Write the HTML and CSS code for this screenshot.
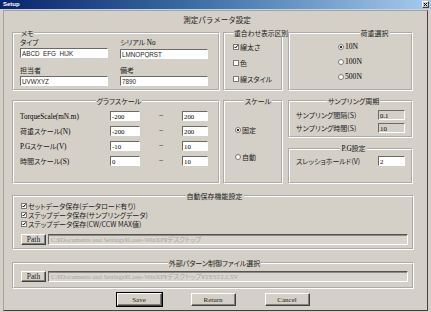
FILE: index.html
```html
<!DOCTYPE html>
<html lang="ja">
<head>
    <meta charset="UTF-8">
    <title>Setup</title>
    <link rel="stylesheet" href="styles.css">
</head>
<body>
    <div class="window">
        <div class="titlebar">
            <span class="title">Setup</span>
            <span class="close"><svg viewBox="0 0 5 5" width="5" height="5"><path d="M0.8 0.8l3.4 3.4M4.2 0.8l-3.4 3.4" stroke="#000" stroke-width="1"/></svg></span>
        </div>

        <div class="panel">
            <div class="heading">測定パラメータ設定</div>

            <!-- 上段 -->
            <div class="row">
                <fieldset class="group memo">
                    <legend class="left">メモ</legend>
                    <div class="memo-grid">
                        <div class="field"><span>タイプ</span><input class="edit" value="ABCD_EFG_HIJK"></div>
                        <div class="field"><span>シリアル <span class="lt">No</span></span><input class="edit" value="LMNOPQRST"></div>
                        <div class="field"><span>担当者</span><input class="edit" value="UVWXYZ"></div>
                        <div class="field"><span>備考</span><input class="edit" value="7890"></div>
                    </div>
                </fieldset>

                <fieldset class="group overlay">
                    <legend class="left">重合わせ表示区別</legend>
                    <div class="opt"><svg class="cb" viewBox="0 0 6 6"><rect x="0.5" y="0.5" width="5" height="5" fill="#fff" stroke="#7c7a76"/><path d="M1.4 2.8l1.1 1.2 2.1-2.6" fill="none" stroke="#000"/></svg>線太さ</div>
                    <div class="opt"><svg class="cb" viewBox="0 0 6 6"><rect x="0.5" y="0.5" width="5" height="5" fill="#fff" stroke="#7c7a76"/></svg>色</div>
                    <div class="opt"><svg class="cb" viewBox="0 0 6 6"><rect x="0.5" y="0.5" width="5" height="5" fill="#fff" stroke="#7c7a76"/></svg>線スタイル</div>
                </fieldset>

                <fieldset class="group load">
                    <legend>荷重選択</legend>
                    <div class="opt lt big"><svg class="rb" viewBox="0 0 6 6"><circle cx="3" cy="3" r="2.5" fill="#fff" stroke="#7c7a76"/><circle cx="3" cy="3" r="1.1" fill="#000"/></svg>10N</div>
                    <div class="opt lt big"><svg class="rb" viewBox="0 0 6 6"><circle cx="3" cy="3" r="2.5" fill="#fff" stroke="#7c7a76"/></svg>100N</div>
                    <div class="opt lt big"><svg class="rb" viewBox="0 0 6 6"><circle cx="3" cy="3" r="2.5" fill="#fff" stroke="#7c7a76"/></svg>500N</div>
                </fieldset>
            </div>

            <!-- 中段 -->
            <div class="row mid">
                <fieldset class="group graph">
                    <legend>グラフスケール</legend>
                    <div class="scale-row"><span class="lbl"><span class="lt">TorqueScale(mN.m)</span></span><input class="edit num" value="-200"><span class="tilde">~</span><input class="edit num max" value="200"></div>
                    <div class="scale-row"><span class="lbl">荷重スケール<span class="lt">(N)</span></span><input class="edit num" value="-200"><span class="tilde">~</span><input class="edit num max" value="200"></div>
                    <div class="scale-row"><span class="lbl"><span class="lt">P.G</span>スケール<span class="lt">(V)</span></span><input class="edit num" value="-10"><span class="tilde">~</span><input class="edit num max" value="10"></div>
                    <div class="scale-row"><span class="lbl">時間スケール<span class="lt">(S)</span></span><input class="edit num" value="0"><span class="tilde">~</span><input class="edit num max" value="10"></div>
                </fieldset>

                <fieldset class="group scale">
                    <legend>スケール</legend>
                    <div class="opt"><svg class="rb" viewBox="0 0 6 6"><circle cx="3" cy="3" r="2.5" fill="#fff" stroke="#7c7a76"/><circle cx="3" cy="3" r="1.1" fill="#000"/></svg>固定</div>
                    <div class="opt"><svg class="rb" viewBox="0 0 6 6"><circle cx="3" cy="3" r="2.5" fill="#fff" stroke="#7c7a76"/></svg>自動</div>
                </fieldset>

                <div class="col">
                    <fieldset class="group sampling">
                        <legend>サンプリング周期</legend>
                        <div class="set-row"><span class="lbl">サンプリング間隔(S)</span><input class="edit small" value="0.1" disabled></div>
                        <div class="set-row"><span class="lbl">サンプリング時間(S)</span><input class="edit small" value="10" disabled></div>
                    </fieldset>
                    <fieldset class="group pg">
                        <legend><span class="lt">P.G</span>設定</legend>
                        <div class="set-row"><span class="lbl">スレッショホールド(V)</span><input class="edit small" value="2"></div>
                    </fieldset>
                </div>
            </div>

            <!-- 自動保存 -->
            <fieldset class="group autosave">
                <legend>自動保存機能設定</legend>
                <div class="opt line"><svg class="cb" viewBox="0 0 6 6"><rect x="0.5" y="0.5" width="5" height="5" fill="#fff" stroke="#7c7a76"/><path d="M1.4 2.8l1.1 1.2 2.1-2.6" fill="none" stroke="#000"/></svg>セットデータ保存(データロード有り)</div>
                <div class="opt line"><svg class="cb" viewBox="0 0 6 6"><rect x="0.5" y="0.5" width="5" height="5" fill="#fff" stroke="#7c7a76"/><path d="M1.4 2.8l1.1 1.2 2.1-2.6" fill="none" stroke="#000"/></svg>ステップデータ保存(サンプリングデータ)</div>
                <div class="opt line"><svg class="cb" viewBox="0 0 6 6"><rect x="0.5" y="0.5" width="5" height="5" fill="#fff" stroke="#7c7a76"/><path d="M1.4 2.8l1.1 1.2 2.1-2.6" fill="none" stroke="#000"/></svg>ステップデータ保存(CW/CCW MAX値)</div>
                <div class="path-row first">
                    <button class="btn path">Path</button>
                    <div class="path-field">C:¥Documents and Settings¥Laste-WinXP¥デスクトップ</div>
                </div>
            </fieldset>

            <!-- 外部パターン -->
            <fieldset class="group pattern">
                <legend>外部パターン制御ファイル選択</legend>
                <div class="path-row">
                    <button class="btn path">Path</button>
                    <div class="path-field">C:¥Documents and Settings¥Laste-WinXP¥デスクトップ¥TEST2.CSV</div>
                </div>
            </fieldset>

            <div class="buttons">
                <button class="btn default">Save</button>
                <button class="btn">Return</button>
                <button class="btn">Cancel</button>
            </div>
        </div>
    </div>
</body>
</html>
```

FILE: styles.css
```css
* {
    box-sizing: border-box;
}
body {
    margin: 0;
    font-family: "Noto Sans CJK JP", sans-serif;
    font-size: 7px;
    line-height: 8px;
    font-feature-settings: "palt";
    color: #1c1c1c;
    background: #fff;
}
.window {
    width: 431px;
    height: 312px;
    background: #d4d0c8;
    overflow: hidden;
}
.titlebar {
    height: 9px;
    display: flex;
    align-items: center;
    padding: 0 2px 0 3px;
    background: linear-gradient(to right, #0a246a, #3a6ea5 45%, #a6caf0);
}
.title {
    color: #fff;
    font-family: "Liberation Sans", sans-serif;
    font-weight: bold;
    font-size: 6px;
    line-height: 9px;
}
.close {
    margin-left: auto;
    width: 7px;
    height: 7px;
    display: flex;
    align-items: center;
    justify-content: center;
    background: #d4d0c8;
    border: 1px solid;
    border-color: #fff #404040 #404040 #fff;
}
.panel {
    margin: 1px 3px 0;
    height: 301px;
    border: 1px solid;
    border-color: #a7a39c #404040 #404040 #a7a39c;
    padding: 5px 13px 4px 8px;
}
.heading {
    text-align: center;
    font-size: 7.5px;
    line-height: 8px;
    padding-left: 8px;
    font-feature-settings: normal;
}
.lt {
    font-family: "Liberation Serif", serif;
    font-size: 7.2px;
    color: #000;
}
.lt.big {
    font-size: 7.6px;
}

/* group box */
.group {
    margin: 0;
    padding: 0;
    min-width: 0;
    border: 2px groove #fff;
}
.group legend {
    margin: 0 auto;
    padding: 0 1px;
    line-height: 8px;
    white-space: nowrap;
}
.group legend.left {
    margin: 0 0 0 1px;
    padding: 0;
}
.row {
    display: flex;
    margin-top: 5px;
}
.row.mid {
    margin-top: 6px;
}

/* edit box */
.edit {
    display: block;
    height: 10px;
    margin: 0;
    padding: 0 1px;
    border: 1px solid;
    border-color: #6d6a65 #fff #fff #6d6a65;
    background: #fff;
    color: #1c1c1c;
    font: 6.3px/8px "Liberation Sans", sans-serif;
    outline: none;
}
.edit:disabled {
    background: #d4d0c8;
    color: #a19d96;
}
.edit.num,
.edit.small {
    font-family: "Liberation Serif", serif;
    font-size: 6.8px;
    color: #000;
}

/* options */
.opt {
    display: flex;
    align-items: center;
    height: 8px;
    white-space: nowrap;
}
.cb,
.rb {
    width: 6px;
    height: 6px;
    flex: none;
    margin-right: 1px;
}

/* メモ */
.memo {
    width: 208px;
    height: 62px;
    padding: 1px 0 0 6px;
}
.memo-grid {
    display: grid;
    grid-template-columns: 88px 88px;
    column-gap: 12px;
    row-gap: 7px;
}
.field .edit {
    width: 88px;
    margin-top: 2px;
}

/* 重合わせ */
.overlay {
    width: 60px;
    height: 62px;
    margin-left: 3px;
    padding: 6px 0 0 8px;
}
.overlay legend {
    font-size: 6.8px;
}
.overlay .opt + .opt {
    margin-top: 8px;
}
.load {
    width: 125px;
    height: 62px;
    margin-left: 5px;
    padding: 6px 0 0 48px;
}
.load .opt + .opt {
    margin-top: 7px;
}

/* グラフスケール */
.graph {
    width: 208px;
    height: 87px;
    padding: 6px 0 0 6px;
}
.scale-row {
    display: flex;
    align-items: center;
    height: 10px;
}
.scale-row + .scale-row {
    margin-top: 5px;
}
.scale-row .lbl {
    width: 90px;
    white-space: nowrap;
}
.edit.num {
    width: 30px;
}
.edit.num.max {
    width: 26px;
}
.tilde {
    width: 42px;
    text-align: center;
    font-family: "Liberation Sans", sans-serif;
    font-size: 8px;
    color: #444;
}
.scale {
    width: 60px;
    height: 87px;
    margin-left: 3px;
    padding: 21px 0 0 10px;
}
.scale .opt + .opt {
    margin-top: 19px;
}
.col {
    width: 125px;
    margin-left: 5px;
    display: flex;
    flex-direction: column;
    gap: 6px;
}
.sampling {
    height: 41px;
    padding: 5px 0 0 6px;
}
.pg {
    height: 40px;
    padding: 3px 0 0 6px;
}
.set-row {
    display: flex;
    align-items: center;
    height: 10px;
}
.set-row + .set-row {
    margin-top: 3px;
}
.set-row .lbl {
    width: 82px;
    white-space: nowrap;
}
.edit.small {
    width: 27px;
}

/* 自動保存 / 外部パターン */
.autosave {
    margin-top: 8px;
    height: 58px;
    padding: 1px 4px 0 7px;
}
.opt.line {
    height: 9px;
}
.pattern {
    margin-top: 9px;
    height: 30px;
    padding: 4px 4px 0 7px;
}
.path-row {
    display: flex;
    gap: 2px;
    height: 11px;
}
.path-row.first {
    margin-top: 6px;
}
.path-field {
    flex: 1;
    padding: 0 2px;
    border: 1px solid;
    border-color: #55534f #fff #fff #6d6a65;
    box-shadow: inset 0 1px 0 #8d8a84;
    background: #d8d5ce;
    color: #aaa69f;
    font-family: "Liberation Serif", "Noto Sans CJK JP", serif;
    font-size: 6.6px;
    line-height: 9px;
    white-space: nowrap;
    overflow: hidden;
}

/* buttons */
.btn {
    margin: 0;
    padding: 0;
    width: 45px;
    height: 13px;
    background: #d4d0c8;
    border: 1px solid;
    border-color: #fff #404040 #404040 #fff;
    box-shadow: inset -1px -1px 0 #808080;
    font-family: "Liberation Serif", serif;
    font-size: 7px;
    line-height: 10px;
    color: #1c1c1c;
}
.btn.path {
    width: 25px;
    height: 11px;
    font-size: 7.5px;
    line-height: 9px;
}
.btn.default {
    outline: 1px solid #000;
}
.buttons {
    display: flex;
    justify-content: center;
    gap: 29px;
    margin-top: 4px;
}
```
